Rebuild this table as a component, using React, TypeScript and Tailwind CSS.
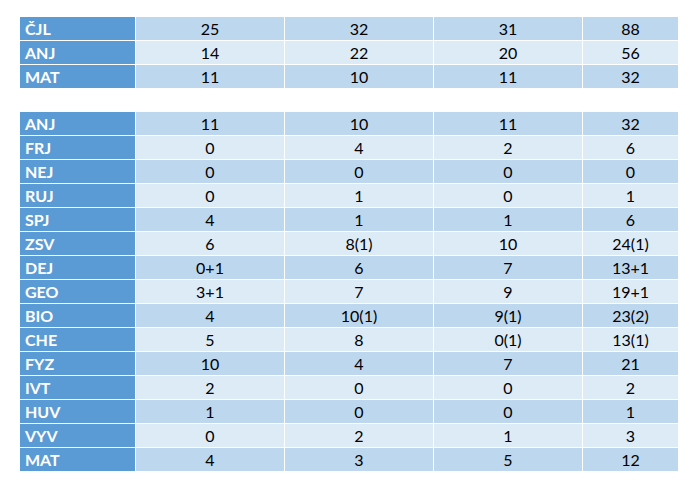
const top: [string, string, string, string, string][] = [
  ["ČJL", "25", "32", "31", "88"],
  ["ANJ", "14", "22", "20", "56"],
  ["MAT", "11", "10", "11", "32"],
];

const bottom: [string, string, string, string, string][] = [
  ["ANJ", "11", "10", "11", "32"],
  ["FRJ", "0", "4", "2", "6"],
  ["NEJ", "0", "0", "0", "0"],
  ["RUJ", "0", "1", "0", "1"],
  ["SPJ", "4", "1", "1", "6"],
  ["ZSV", "6", "8(1)", "10", "24(1)"],
  ["DEJ", "0+1", "6", "7", "13+1"],
  ["GEO", "3+1", "7", "9", "19+1"],
  ["BIO", "4", "10(1)", "9(1)", "23(2)"],
  ["CHE", "5", "8", "0(1)", "13(1)"],
  ["FYZ", "10", "4", "7", "21"],
  ["IVT", "2", "0", "0", "2"],
  ["HUV", "1", "0", "0", "1"],
  ["VYV", "0", "2", "1", "3"],
  ["MAT", "4", "3", "5", "12"],
];

function Table({ rows }: { rows: [string, string, string, string, string][] }) {
  return (
    <div className="grid grid-cols-[115px_148px_148px_148px_95px] gap-px bg-white w-fit">
      {rows.map((row, i) => {
        const shade = i % 2 === 0 ? "bg-[#bdd7ee]" : "bg-[#ddebf7]";
        return [
          <div
            key={`${i}-h`}
            className="h-[23px] bg-[#5b9bd5] text-white font-bold pl-[5px] flex items-center leading-none"
          >
            {row[0]}
          </div>,
          ...row.slice(1).map((v, j) => (
            <div
              key={`${i}-${j}`}
              className={`h-[23px] ${shade} text-black flex items-center justify-center leading-none`}
            >
              {v}
            </div>
          )),
        ];
      })}
    </div>
  );
}

export default function App() {
  return (
    <div className="w-[693px] h-[480px] bg-white pt-[17px] pl-[20px] text-[16px] font-['Lato',sans-serif]">
      <Table rows={top} />
      <div className="h-[24px]" />
      <Table rows={bottom} />
    </div>
  );
}
